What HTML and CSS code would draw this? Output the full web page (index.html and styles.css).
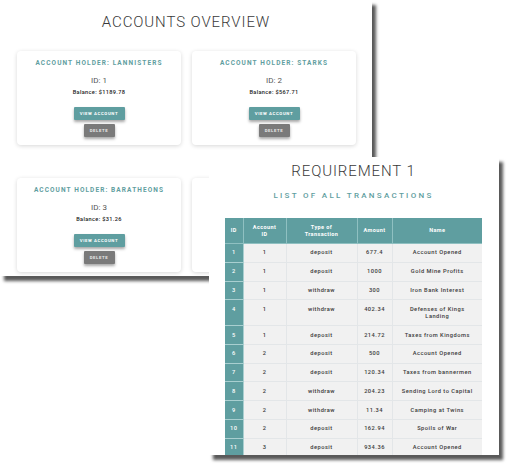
FILE: index.html
```html
<!DOCTYPE html>
<html>
<head>
<meta charset="utf-8">
<link rel="stylesheet" href="styles.css">
</head>
<body>
<div class="desk">
  <section class="shot shot-accounts">
    <h1 class="page-title">ACCOUNTS OVERVIEW</h1>
    <div class="cards">
      <div class="card">
        <div class="holder">ACCOUNT HOLDER: LANNISTERS</div>
        <div class="acc-id">ID: 1</div>
        <div class="balance">Balance: $1189.78</div>
        <button class="btn btn-view">VIEW ACCOUNT</button>
        <button class="btn btn-delete">DELETE</button>
      </div>
      <div class="card">
        <div class="holder">ACCOUNT HOLDER: STARKS</div>
        <div class="acc-id">ID: 2</div>
        <div class="balance">Balance: $567.71</div>
        <button class="btn btn-view">VIEW ACCOUNT</button>
        <button class="btn btn-delete">DELETE</button>
      </div>
      <div class="card">
        <div class="holder">ACCOUNT HOLDER: BARATHEONS</div>
        <div class="acc-id">ID: 3</div>
        <div class="balance">Balance: $31.26</div>
        <button class="btn btn-view">VIEW ACCOUNT</button>
        <button class="btn btn-delete">DELETE</button>
      </div>
      <div class="card">
        <div class="holder">ACCOUNT HOLDER: TARGARYENS</div>
        <div class="acc-id">ID: 4</div>
        <div class="balance">Balance: $0.00</div>
        <button class="btn btn-view">VIEW ACCOUNT</button>
        <button class="btn btn-delete">DELETE</button>
      </div>
    </div>
  </section>

  <section class="shot shot-req">
    <h1 class="page-title">REQUIREMENT 1</h1>
    <h2 class="sub-title">LIST OF ALL TRANSACTIONS</h2>
    <table class="tx">
      <colgroup>
        <col class="c-id"><col class="c-acc"><col class="c-type"><col class="c-amt"><col class="c-name">
      </colgroup>
      <thead>
        <tr><th>ID</th><th>Account<br>ID</th><th>Type of<br>Transaction</th><th>Amount</th><th>Name</th></tr>
      </thead>
      <tbody>
        <tr><td>1</td><td>1</td><td>deposit</td><td>677.4</td><td>Account Opened</td></tr>
        <tr><td>2</td><td>1</td><td>deposit</td><td>1000</td><td>Gold Mine Profits</td></tr>
        <tr><td>3</td><td>1</td><td>withdraw</td><td>300</td><td>Iron Bank Interest</td></tr>
        <tr><td>4</td><td>1</td><td>withdraw</td><td>402.34</td><td>Defenses of Kings<br>Landing</td></tr>
        <tr><td>5</td><td>1</td><td>deposit</td><td>214.72</td><td>Taxes from Kingdoms</td></tr>
        <tr><td>6</td><td>2</td><td>deposit</td><td>500</td><td>Account Opened</td></tr>
        <tr><td>7</td><td>2</td><td>deposit</td><td>120.34</td><td>Taxes from bannermen</td></tr>
        <tr><td>8</td><td>2</td><td>withdraw</td><td>204.23</td><td>Sending Lord to Capital</td></tr>
        <tr><td>9</td><td>2</td><td>withdraw</td><td>11.34</td><td>Camping at Twins</td></tr>
        <tr><td>10</td><td>2</td><td>deposit</td><td>162.94</td><td>Spoils of War</td></tr>
        <tr><td>11</td><td>3</td><td>deposit</td><td>934.36</td><td>Account Opened</td></tr>
      </tbody>
    </table>
  </section>
</div>
</body>
</html>
```

FILE: styles.css
```css
html, body {
  margin: 0;
  padding: 0;
  background: #ffffff;
}

body {
  font-family: "Roboto", "Liberation Sans", sans-serif;
  width: 510px;
  height: 467px;
  overflow: hidden;
}

.desk {
  position: relative;
  width: 510px;
  height: 467px;
}

.shot {
  position: absolute;
  background: #ffffff;
  overflow: hidden;
  box-sizing: border-box;
  box-shadow: 4px 5px 3px rgba(0, 0, 0, 0.65);
}

.shot-accounts {
  left: 0;
  top: 0;
  width: 372px;
  height: 276px;
  padding: 12px 0 0 17px;
  z-index: 1;
}

.shot-req {
  left: 209px;
  top: 157px;
  width: 290px;
  height: 298px;
  padding: 6px 17px 0 16px;
  z-index: 2;
}

.page-title {
  margin: 0;
  font-family: "Roboto", "Liberation Sans", sans-serif;
  font-weight: 300;
  font-size: 15px;
  line-height: 20px;
  letter-spacing: 0.9px;
  color: #3a3a3a;
  text-align: center;
}

.shot-accounts .page-title {
  width: 338px;
}

.shot-req .page-title {
  line-height: 16px;
}

.cards {
  display: grid;
  grid-template-columns: 164px 164px;
  column-gap: 11px;
  row-gap: 33px;
  margin-top: 19px;
}

.card {
  background: #ffffff;
  border-radius: 4px;
  box-shadow: 0 1px 4px rgba(0, 0, 0, 0.16);
  height: 94px;
  box-sizing: border-box;
  padding-top: 9px;
  display: flex;
  flex-direction: column;
  align-items: center;
}

.holder {
  font-family: "Roboto", "Liberation Sans", sans-serif;
  font-weight: 700;
  font-size: 6.5px;
  line-height: 7px;
  letter-spacing: 1.1px;
  color: #5f9ea0;
  white-space: nowrap;
}

.acc-id {
  margin-top: 9px;
  font-size: 8px;
  line-height: 9px;
  color: #555555;
}

.balance {
  margin-top: 3.5px;
  font-size: 5.6px;
  line-height: 7px;
  font-weight: 500;
  letter-spacing: 0.35px;
  color: #222222;
}

.btn {
  display: block;
  border: none;
  margin: 0;
  padding: 0;
  height: 13px;
  font-family: "Roboto", "Liberation Sans", sans-serif;
  font-weight: 700;
  font-size: 4.3px;
  letter-spacing: 0.6px;
  color: #ffffff;
  border-radius: 1px;
  box-shadow: 0 2px 3px rgba(0, 0, 0, 0.35);
}

.btn-view {
  margin-top: 11.5px;
  width: 51px;
  background: #5f9ea0;
}

.btn-delete {
  margin-top: 4px;
  width: 31px;
  background: #7a7a7a;
  color: #e8e8e8;
}

.sub-title {
  margin: 12px 0 0 0;
  font-family: "Roboto", "Liberation Sans", sans-serif;
  font-weight: 500;
  font-size: 8px;
  line-height: 10px;
  letter-spacing: 2.3px;
  color: #5f9ea0;
  text-align: center;
}

.tx {
  margin-top: 17px;
  width: 257px;
  border-collapse: collapse;
  table-layout: fixed;
  font-family: "Roboto", "Liberation Sans", sans-serif;
}

.c-id { width: 18px; }
.c-acc { width: 43px; }
.c-type { width: 71px; }
.c-amt { width: 35px; }
.c-name { width: 90px; }

.tx th {
  background: #5f9ea0;
  color: #ffffff;
  font-weight: 700;
  font-size: 5.5px;
  line-height: 7px;
  letter-spacing: 0.4px;
  padding: 5.5px 0;
  border: 1px solid #8fc0c1;
  border-top: none;
  text-align: center;
}

.tx th:first-child { border-left: none; }
.tx th:last-child { border-right: none; }

.tx td {
  background: #f1f1f1;
  color: #3a3a3a;
  font-weight: 500;
  font-size: 5.7px;
  line-height: 7px;
  letter-spacing: 0.5px;
  padding: 5.4px 0;
  border: 1px solid #e3e6e8;
  text-align: center;
  vertical-align: top;
}

.tx td:first-child {
  background: #5f9ea0;
  color: #ffffff;
  border-color: #a9cfd0;
  border-left: none;
}

.tx td:last-child { border-right: none; }
```
